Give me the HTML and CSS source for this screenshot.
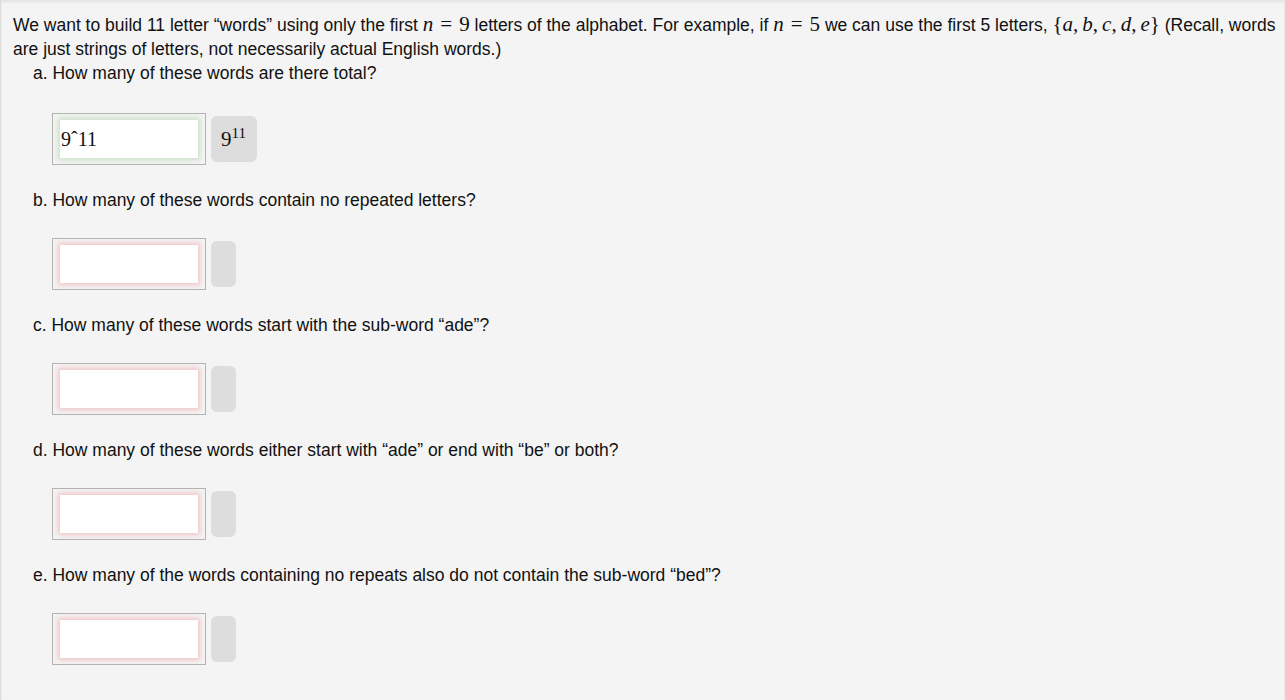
FILE: index.html
```html
<!DOCTYPE html>
<html>
<head>
<meta charset="utf-8">
<link rel="stylesheet" href="styles.css">
</head>
<body>
<div class="problem">
  <p class="intro">We want to build 11 letter “words” using only the first <span class="m"><i>n</i><span class="op">=</span>9</span> letters of the alphabet. For example, if <span class="m"><i>n</i><span class="op">=</span>5</span> we can use the first 5 letters, <span class="m">{<i>a</i>,<span class="sp"></span><i>b</i>,<span class="sp"></span><i>c</i>,<span class="sp"></span><i>d</i>,<span class="sp"></span><i>e</i>}</span> (Recall, words are just strings of letters, not necessarily actual English words.)</p>
  <ol class="parts">
    <li class="part part-first">
      <div class="q">a. How many of these words are there total?</div>
      <div class="ans">
        <div class="box"><div class="field ok">9ˆ11</div></div>
        <div class="preview full"><span class="pm">9<sup>11</sup></span></div>
      </div>
    </li>
    <li class="part">
      <div class="q">b. How many of these words contain no repeated letters?</div>
      <div class="ans">
        <div class="box"><div class="field bad"></div></div>
        <div class="preview"></div>
      </div>
    </li>
    <li class="part">
      <div class="q">c. How many of these words start with the sub-word “ade”?</div>
      <div class="ans">
        <div class="box"><div class="field bad"></div></div>
        <div class="preview"></div>
      </div>
    </li>
    <li class="part">
      <div class="q">d. How many of these words either start with “ade” or end with “be” or both?</div>
      <div class="ans">
        <div class="box"><div class="field bad"></div></div>
        <div class="preview"></div>
      </div>
    </li>
    <li class="part">
      <div class="q">e. How many of the words containing no repeats also do not contain the sub-word “bed”?</div>
      <div class="ans">
        <div class="box"><div class="field bad"></div></div>
        <div class="preview"></div>
      </div>
    </li>
  </ol>
</div>
</body>
</html>
```

FILE: styles.css
```css
html, body {
  margin: 0;
  padding: 0;
  background: #f4f4f4;
}
body {
  font-family: "Liberation Sans", Arial, sans-serif;
  font-size: 17.5px;
  line-height: 24px;
  color: #111;
}
.problem {
  min-height: 700px;
  box-sizing: border-box;
  border-left: 1px solid #dcdcdc;
  box-shadow: inset 0 2px 3px rgba(0, 0, 0, 0.07);
  padding: 12px 0 0 12px;
}
.intro {
  margin: 0;
}
.m {
  font-family: "Liberation Serif", "DejaVu Serif", serif;
  font-size: 21px;
}
.m i {
  font-style: italic;
}
.op {
  padding: 0 7px;
}
.sp {
  display: inline-block;
  width: 4px;
}
.parts {
  list-style: none;
  margin: 0;
  padding: 0 0 0 20px;
}
.part {
  padding-bottom: 23px;
}
.ans {
  display: flex;
  align-items: center;
  margin-top: 26px;
  padding-left: 19px;
}
.part-first .ans {
  margin-top: 28px;
}
.box {
  box-sizing: border-box;
  width: 154px;
  height: 52px;
  border: 1px solid #b4b4b4;
  padding: 6px 7px;
}
.field {
  height: 38px;
  background: #fff;
  font-family: "Liberation Serif", "DejaVu Serif", serif;
  font-size: 20px;
  line-height: 38px;
  padding-left: 1px;
  color: #111;
}
.field.ok {
  box-shadow: 0 0 5px 2px rgba(150, 200, 140, 0.45);
}
.field.bad {
  box-shadow: 0 0 5px 2px rgba(235, 140, 140, 0.45);
}
.preview {
  box-sizing: border-box;
  width: 25px;
  height: 46px;
  margin-left: 5px;
  background: #dddddd;
  border-radius: 6px;
}
.preview.full {
  width: 46px;
  padding: 0 0 0 10px;
  line-height: 46px;
}
.pm {
  font-family: "Liberation Serif", "DejaVu Serif", serif;
  font-size: 21px;
}
.pm sup {
  font-size: 15px;
  line-height: 0;
  vertical-align: 8px;
}
```
